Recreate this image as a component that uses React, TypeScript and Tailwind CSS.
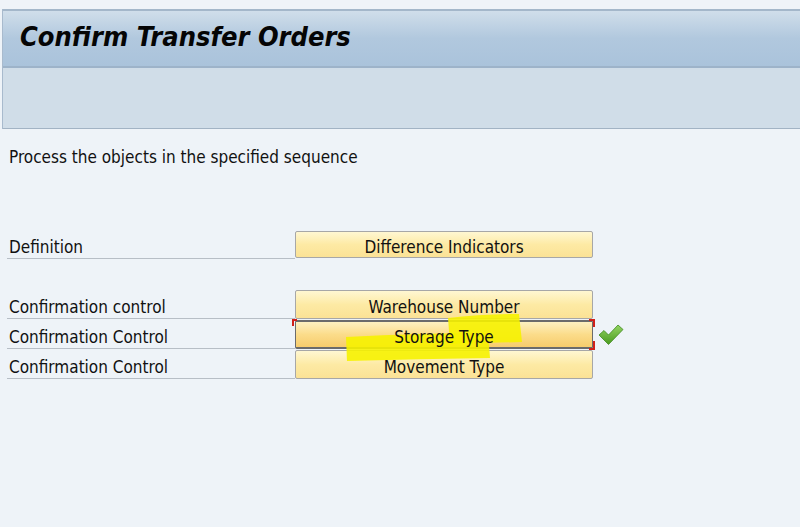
import React from "react";

const font = { fontFamily: '"DejaVu Sans Condensed", "DejaVu Sans", "Liberation Sans", sans-serif' };

function Row({ label, button, active, top = 1 }: { label: string; button: string; active?: boolean; top?: number }) {
  return (
    <div className="flex h-[30px] items-stretch">
      <div className="ml-[7px] w-[288px] border-b border-[#b7bec6] flex items-end pl-[2px] pb-[2px] text-[17px] leading-[17px] text-[#111]">
        {label}
      </div>
      <div className={top === 2 ? "relative w-[298px] h-[30px] pt-[2px] pb-[1px]" : "relative w-[298px] h-[30px] pt-[1px]"}>
        <div
          className={
            active
              ? "h-full rounded-[2px] border border-[#6b6b6b] border-y-2 bg-gradient-to-b from-[#fdf0c0] via-[#fbdc8a] to-[#f7cc6c] flex items-center justify-center pt-[5px] text-[17px] leading-[17px] text-[#111]"
              : "h-full rounded-[2px] border border-[#a7a7a7] bg-gradient-to-b from-[#fff7d2] via-[#fdeaa4] to-[#fbe296] flex items-center justify-center pt-[5px] text-[17px] leading-[17px] text-[#111]"
          }
        >
          <span className="relative z-10">{button}</span>
        </div>
        {active && (
          <>
            <div className="absolute left-[-3px] top-0 w-[5px] h-[7px] border-t-2 border-l-2 border-[#d0201a]" />
            <div className="absolute right-[-2px] top-0 w-[6px] h-[8px] border-t-2 border-r-2 border-[#d0201a]" />
            <div className="absolute right-[-2px] bottom-[-1px] w-[6px] h-[9px] border-b-2 border-r-2 border-[#d0201a]" />
          </>
        )}
      </div>
    </div>
  );
}

export default function App() {
  return (
    <div className="relative w-[800px] h-[527px] overflow-hidden bg-[#eef3f8]" style={font}>
      <div className="h-[9px] bg-[#eff3f8]" />
      <div className="ml-[2px] border-l border-[#a8bacd]">
        <div className="h-[59px] border-t-2 border-[#a4b7ca] bg-gradient-to-b from-[#d0deea] via-[#b1c8de] to-[#aac3db] border-b-2 border-b-[#9db3c9] flex items-center pl-[17px] pb-[2px]">
          <span className="text-[27px] font-bold italic text-[#050505]">Confirm Transfer Orders</span>
        </div>
        <div className="h-[61px] bg-[#d0dde8] border-b border-[#a2b3c4]" />
      </div>
      <div className="pl-[9px] pt-[18px] text-[17px] leading-[20px] text-[#111]">
        Process the objects in the specified sequence
      </div>
      <div className="mt-[62px]">
        <Row label="Definition" button="Difference Indicators" top={2} />
        <div className="h-[30px]" />
        <Row label="Confirmation control" button="Warehouse Number" />
        <Row label="Confirmation Control" button="Storage Type" active />
        <Row label="Confirmation Control" button="Movement Type" />
      </div>

      {/* highlighter strokes */}
      <svg className="absolute left-0 top-0 pointer-events-none" width="800" height="527">
        <path d="M448 318 Q480 314 519 314 L522 342 Q485 343 450 344 Z" fill="#f6f200" opacity="0.9" />
        <path d="M346 337 Q420 333 488 333 L490 358 Q420 359 347 361 Z" fill="#f6f200" opacity="0.9" />
      </svg>

      {/* checkmark */}
      <svg className="absolute left-[598px] top-[323px]" width="26" height="24" viewBox="0 0 26 24">
        <defs>
          <linearGradient id="ck" x1="0" y1="0" x2="0" y2="1">
            <stop offset="0" stopColor="#93d462" />
            <stop offset="1" stopColor="#4a9a20" />
          </linearGradient>
        </defs>
        <path d="M1 12 L6 7.5 L10.5 12 L20 2 L25 6.5 L10.5 21.5 Z" fill="url(#ck)" stroke="#3f8a1e" strokeWidth="0.8" strokeLinejoin="round" />
      </svg>
    </div>
  );
}
